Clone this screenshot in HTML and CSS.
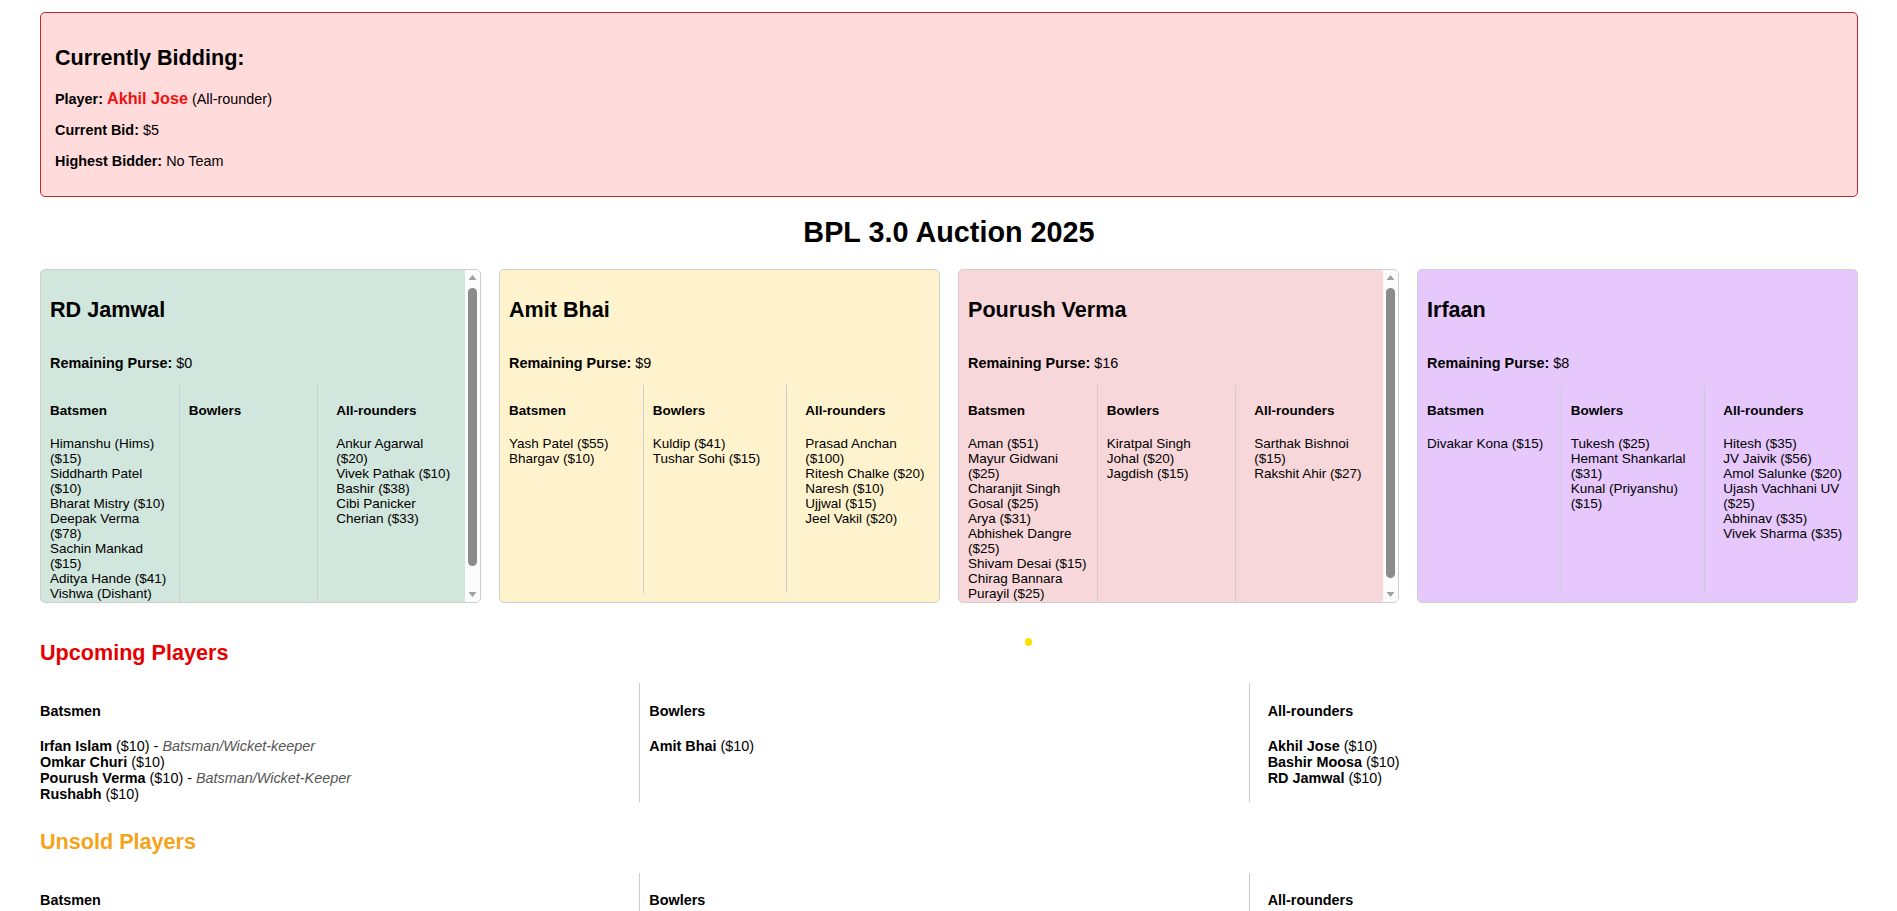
FILE: index.html
```html
<!DOCTYPE html>
<html lang="en">
<head>
<meta charset="utf-8">
<title>BPL 3.0 Auction 2025</title>
<link rel="stylesheet" href="styles.css">
</head>
<body>
<div class="page">
  <section class="bidding">
    <h2>Currently Bidding:</h2>
    <p><b>Player:</b> <span class="bid-name">Akhil Jose</span> (All-rounder)</p>
    <p><b>Current Bid:</b> $5</p>
    <p><b>Highest Bidder:</b> No Team</p>
  </section>

  <h1 class="title">BPL 3.0 Auction 2025</h1>

  <div class="teams">
    <div class="team team-green">
      <div class="team-body">
        <h2>RD Jamwal</h2>
        <p><b>Remaining Purse:</b> $0</p>
        <div class="cols">
          <div class="col">
            <h4>Batsmen</h4>
            <ul>
              <li>Himanshu (Hims) ($15)</li>
              <li>Siddharth Patel ($10)</li>
              <li>Bharat Mistry ($10)</li>
              <li>Deepak Verma ($78)</li>
              <li>Sachin Mankad ($15)</li>
              <li>Aditya Hande ($41)</li>
              <li>Vishwa (Dishant) ($30)</li>
            </ul>
          </div>
          <div class="col">
            <h4>Bowlers</h4>
            <ul></ul>
          </div>
          <div class="col">
            <h4>All-rounders</h4>
            <ul>
              <li>Ankur Agarwal ($20)</li>
              <li>Vivek Pathak ($10)</li>
              <li>Bashir ($38)</li>
              <li>Cibi Panicker Cherian ($33)</li>
            </ul>
          </div>
        </div>
      </div>
      <div class="scrollbar">
        <span class="sb-btn"><svg width="15" height="15" viewBox="0 0 15 15"><path d="M3.5 10 L7.5 5 L11.5 10 Z" fill="#a0a0a0"/></svg></span>
        <span class="sb-track"><span class="sb-thumb" style="height: 278px"></span></span>
        <span class="sb-btn"><svg width="15" height="15" viewBox="0 0 15 15"><path d="M3.5 5 L7.5 10 L11.5 5 Z" fill="#a0a0a0"/></svg></span>
      </div>
    </div>

    <div class="team team-yellow">
      <div class="team-body">
        <h2>Amit Bhai</h2>
        <p><b>Remaining Purse:</b> $9</p>
        <div class="cols">
          <div class="col">
            <h4>Batsmen</h4>
            <ul>
              <li>Yash Patel ($55)</li>
              <li>Bhargav ($10)</li>
            </ul>
          </div>
          <div class="col">
            <h4>Bowlers</h4>
            <ul>
              <li>Kuldip ($41)</li>
              <li>Tushar Sohi ($15)</li>
            </ul>
          </div>
          <div class="col">
            <h4>All-rounders</h4>
            <ul>
              <li>Prasad Anchan ($100)</li>
              <li>Ritesh Chalke ($20)</li>
              <li>Naresh ($10)</li>
              <li>Ujjwal ($15)</li>
              <li>Jeel Vakil ($20)</li>
            </ul>
          </div>
        </div>
      </div>
    </div>

    <div class="team team-pink">
      <div class="team-body">
        <h2>Pourush Verma</h2>
        <p><b>Remaining Purse:</b> $16</p>
        <div class="cols">
          <div class="col">
            <h4>Batsmen</h4>
            <ul>
              <li>Aman ($51)</li>
              <li>Mayur Gidwani ($25)</li>
              <li>Charanjit Singh Gosal ($25)</li>
              <li>Arya ($31)</li>
              <li>Abhishek Dangre ($25)</li>
              <li>Shivam Desai ($15)</li>
              <li>Chirag Bannara Purayil ($25)</li>
            </ul>
          </div>
          <div class="col">
            <h4>Bowlers</h4>
            <ul>
              <li>Kiratpal Singh Johal ($20)</li>
              <li>Jagdish ($15)</li>
            </ul>
          </div>
          <div class="col">
            <h4>All-rounders</h4>
            <ul>
              <li>Sarthak Bishnoi ($15)</li>
              <li>Rakshit Ahir ($27)</li>
            </ul>
          </div>
        </div>
      </div>
      <div class="scrollbar">
        <span class="sb-btn"><svg width="15" height="15" viewBox="0 0 15 15"><path d="M3.5 10 L7.5 5 L11.5 10 Z" fill="#a0a0a0"/></svg></span>
        <span class="sb-track"><span class="sb-thumb" style="height: 290px"></span></span>
        <span class="sb-btn"><svg width="15" height="15" viewBox="0 0 15 15"><path d="M3.5 5 L7.5 10 L11.5 5 Z" fill="#a0a0a0"/></svg></span>
      </div>
    </div>

    <div class="team team-purple">
      <div class="team-body">
        <h2>Irfaan</h2>
        <p><b>Remaining Purse:</b> $8</p>
        <div class="cols">
          <div class="col">
            <h4>Batsmen</h4>
            <ul>
              <li>Divakar Kona ($15)</li>
            </ul>
          </div>
          <div class="col">
            <h4>Bowlers</h4>
            <ul>
              <li>Tukesh ($25)</li>
              <li>Hemant Shankarlal ($31)</li>
              <li>Kunal (Priyanshu) ($15)</li>
            </ul>
          </div>
          <div class="col">
            <h4>All-rounders</h4>
            <ul>
              <li>Hitesh ($35)</li>
              <li>JV Jaivik ($56)</li>
              <li>Amol Salunke ($20)</li>
              <li>Ujash Vachhani UV ($25)</li>
              <li>Abhinav ($35)</li>
              <li>Vivek Sharma ($35)</li>
            </ul>
          </div>
        </div>
      </div>
    </div>
  </div>

  <section class="pool">
    <h2 class="pool-title upcoming">Upcoming Players</h2>
    <div class="cols pool-cols">
      <div class="col">
        <h4>Batsmen</h4>
        <ul>
          <li><b>Irfan Islam</b> ($10) - <i class="role">Batsman/Wicket-keeper</i></li>
          <li><b>Omkar Churi</b> ($10)</li>
          <li><b>Pourush Verma</b> ($10) - <i class="role">Batsman/Wicket-Keeper</i></li>
          <li><b>Rushabh</b> ($10)</li>
        </ul>
      </div>
      <div class="col">
        <h4>Bowlers</h4>
        <ul>
          <li><b>Amit Bhai</b> ($10)</li>
        </ul>
      </div>
      <div class="col">
        <h4>All-rounders</h4>
        <ul>
          <li><b>Akhil Jose</b> ($10)</li>
          <li><b>Bashir Moosa</b> ($10)</li>
          <li><b>RD Jamwal</b> ($10)</li>
        </ul>
      </div>
    </div>
  </section>

  <section class="pool">
    <h2 class="pool-title unsold">Unsold Players</h2>
    <div class="cols pool-cols">
      <div class="col">
        <h4>Batsmen</h4>
        <ul></ul>
      </div>
      <div class="col">
        <h4>Bowlers</h4>
        <ul></ul>
      </div>
      <div class="col">
        <h4>All-rounders</h4>
        <ul></ul>
      </div>
    </div>
  </section>
</div>
<span class="dot"></span>
</body>
</html>
```

FILE: styles.css
```css
html {
  scrollbar-width: none;
}

body {
  margin: 0;
  font-family: "Liberation Sans", Arial, sans-serif;
  font-size: 14.4px;
  color: #000;
  background: #fff;
}

.page {
  padding: 12px 39px 0 40px;
}

h2 {
  font-size: 21.6px;
}

/* Currently bidding box */
.bidding {
  background: #ffdbdb;
  border: 1px solid #c62828;
  border-radius: 5px;
  padding: 14px 14px 13px;
}

.bid-name {
  color: #ee1111;
  font-weight: bold;
  font-size: 16.2px;
}

.title {
  font-size: 28.8px;
  text-align: center;
}

/* Team cards */
.teams {
  display: grid;
  grid-template-columns: repeat(4, minmax(0, 1fr));
  gap: 18px;
  margin-bottom: 19px;
}

.team {
  display: flex;
  box-sizing: border-box;
  height: 334px;
  overflow: hidden;
  border: 1px solid #cfcfcf;
  border-radius: 5px;
}

.team-body {
  flex: 1;
  min-width: 0;
  display: flex;
  flex-direction: column;
  padding: 9px;
  overflow: hidden;
}

.team-green { background: #d1e7dd; }
.team-yellow { background: #fff3cd; }
.team-pink { background: #f8d7da; }
.team-purple { background: #e6c8fd; }

.team-body > .cols {
  flex: 1 0 auto;
  font-size: 13.5px;
}

.team li {
  line-height: 15px;
}

/* Scrollbar drawn for overflowing team cards */
.scrollbar {
  flex: 0 0 15px;
  display: flex;
  flex-direction: column;
  background: #fcfcfc;
}

.sb-btn {
  display: block;
  height: 15px;
}

.sb-btn svg {
  display: block;
}

.sb-track {
  flex: 1;
  display: block;
  padding: 3px;
}

.sb-thumb {
  display: block;
  background: #8b8b8b;
  border-radius: 5px;
}

/* Shared 3-column layout */
.cols {
  display: grid;
  grid-template-columns: calc((100% - 20px) / 3) calc((100% + 10px) / 3) calc((100% + 10px) / 3);
}

.col {
  box-sizing: border-box;
  min-width: 0;
  padding-right: 9px;
}

.col + .col {
  border-left: 1px solid #cccccc;
  padding-left: 9px;
  padding-right: 10px;
}

.col:last-child {
  padding-left: 18px;
  padding-right: 0;
}

.col ul {
  margin: 0;
  padding: 0;
  list-style: none;
}

/* Player pools */
.pool {
  display: flow-root;
  margin-bottom: 9px;
}

.pool-title.upcoming { color: #e60000; }
.pool-title.unsold { color: #f5a31a; }

.pool li {
  line-height: 16px;
}

.role {
  color: #555;
}

.dot {
  position: absolute;
  left: 1025px;
  top: 638px;
  width: 7px;
  height: 8px;
  border-radius: 50%;
  background: #ffdd00;
}
```
